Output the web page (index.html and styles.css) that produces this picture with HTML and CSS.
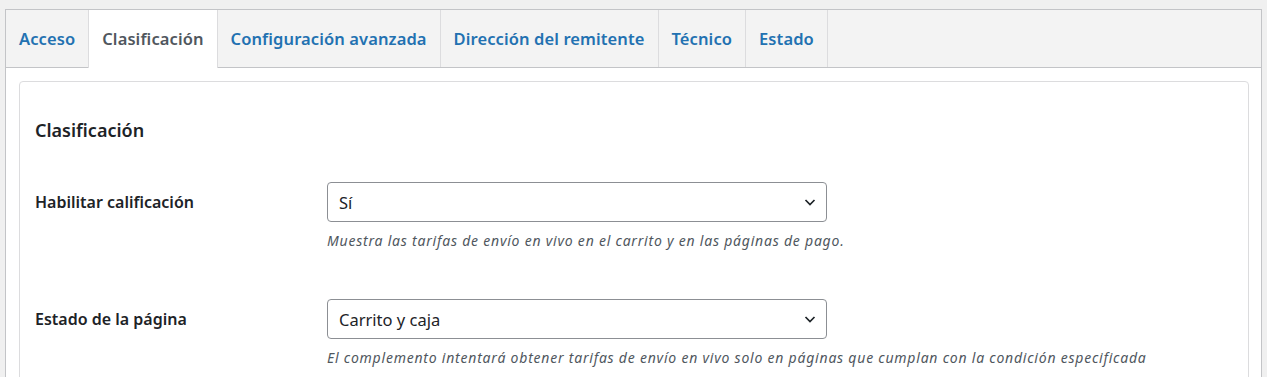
FILE: index.html
```html
<!DOCTYPE html>
<html lang="es">

<head>
  <meta charset="UTF-8">
  <meta name="viewport" content="width=device-width, initial-scale=1.0">
  <title>Clasificación</title>
  <link rel="stylesheet" href="styles.css">
</head>

<body>
  <div class="wrap">
    <nav class="tabs">
      <a href="#" class="tab">Acceso</a>
      <a href="#" class="tab tab--active">Clasificación</a>
      <a href="#" class="tab">Configuración avanzada</a>
      <a href="#" class="tab">Dirección del remitente</a>
      <a href="#" class="tab">Técnico</a>
      <a href="#" class="tab">Estado</a>
    </nav>

    <div class="panel">
      <div class="card">
        <h2 class="card__title">Clasificación</h2>

        <div class="field">
          <label class="field__label" for="enable">Habilitar calificación</label>
          <div class="field__input">
            <div class="select" id="enable">
              <span>Sí</span>
              <svg width="14" height="14" viewBox="0 0 14 14"><path d="M2.5 5l4.5 4.5 4.5-4.5" fill="none" stroke="#1d2327" stroke-width="1.7"/></svg>
            </div>
            <p class="field__desc">Muestra las tarifas de envío en vivo en el carrito y en las páginas de pago.</p>
          </div>
        </div>

        <div class="field">
          <label class="field__label" for="page">Estado de la página</label>
          <div class="field__input">
            <div class="select" id="page">
              <span>Carrito y caja</span>
              <svg width="14" height="14" viewBox="0 0 14 14"><path d="M2.5 5l4.5 4.5 4.5-4.5" fill="none" stroke="#1d2327" stroke-width="1.7"/></svg>
            </div>
            <p class="field__desc">El complemento intentará obtener tarifas de envío en vivo solo en páginas que cumplan con la condición especificada</p>
          </div>
        </div>
      </div>
    </div>
  </div>
</body>

</html>
```

FILE: styles.css
```css
body {
  margin: 0;
  background-color: #f0f0f0;
  font-family: "Noto Sans", "Open Sans", Arial, sans-serif;
  color: #1d2327;
  height: 377px;
  overflow: hidden;
}

.wrap {
  margin: 9px 5px 0 5px;
  border: 1px solid #c3c4c7;
  background-color: #fff;
  height: 400px;
}

.tabs {
  display: flex;
  background-color: #f3f3f3;
  border-bottom: 1px solid #c3c4c7;
  height: 57px;
}

.tab {
  display: block;
  padding: 0 13px;
  line-height: 57px;
  font-size: 16.5px;
  font-weight: 600;
  letter-spacing: 0.1px;
  color: #2271b1;
  text-decoration: none;
  border-right: 1px solid #dcdcde;
}

.tab--active {
  background-color: #fff;
  color: #50575e;
  border-left: 1px solid #dcdcde;
  height: 58px;
  margin-left: -1px;
}

.panel {
  padding: 13px 12px 0 13px;
}

.card {
  border: 1px solid #dcdcde;
  border-radius: 4px;
  padding: 36px 15px 20px 15px;
}

.card__title {
  margin: 0 0 40px 0;
  font-size: 18px;
  font-weight: 600;
  line-height: 24px;
}

.field {
  display: flex;
  margin-bottom: 48px;
}

.field__label {
  width: 292px;
  font-size: 16px;
  font-weight: 600;
  line-height: 22px;
  padding-top: 9px;
}

.field__input {
  width: 500px;
}

.select {
  display: flex;
  align-items: center;
  justify-content: space-between;
  height: 38px;
  border: 1px solid #8c8f94;
  border-radius: 4px;
  padding: 0 9px 0 11px;
  font-size: 16.5px;
}

.field__desc {
  margin: 9px 0 0 0;
  font-size: 14px;
  line-height: 20px;
  letter-spacing: 0.78px;
  font-style: italic;
  color: #50575e;
  white-space: nowrap;
}
```
